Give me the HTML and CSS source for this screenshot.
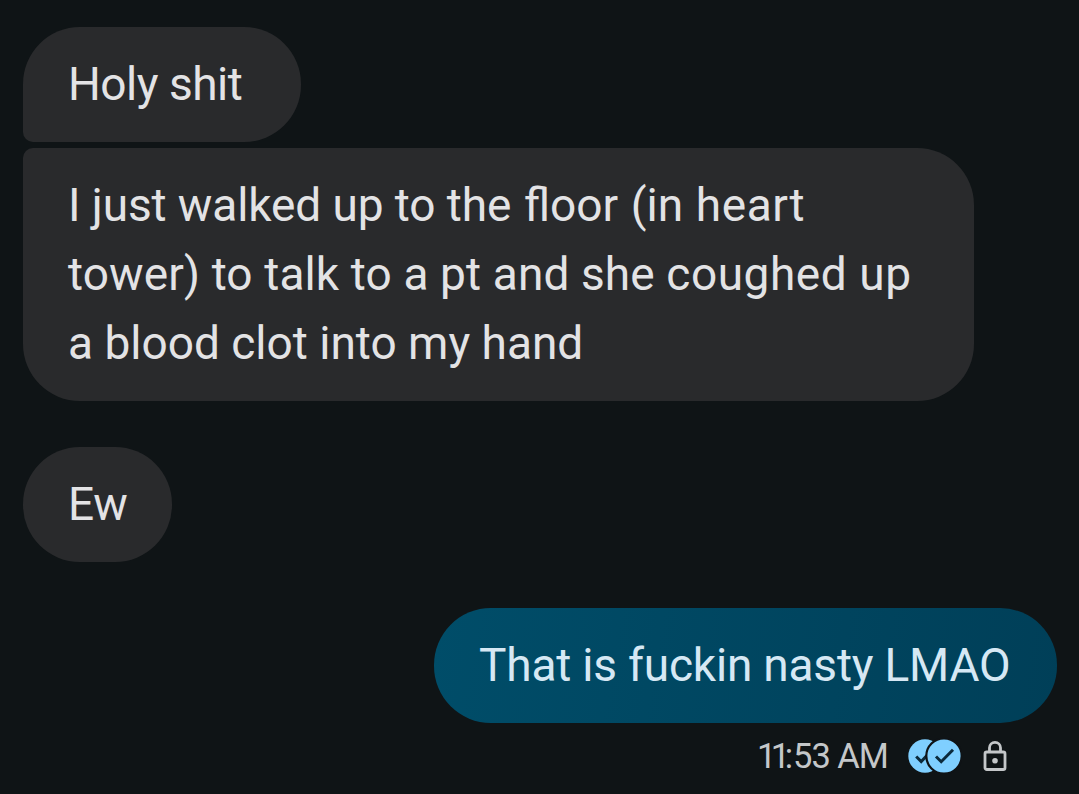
FILE: index.html
```html
<!DOCTYPE html>
<html lang="en">
  <head>
    <meta charset="utf-8">
    <title>Messages</title>
    <link rel="stylesheet" href="styles.css">
  </head>
  <body>
    <main class="chat">
      <div class="bubble first"><span class="short">Holy shit</span></div>
      <div class="bubble last">
        <span class="snug">I just walked up to the</span><span class="spaced"> floor (in </span><span class="wide">heart</span><br>
        <span class="loose">tower) to talk to a pt and she</span> <span class="wide">coughed up</span><br>
        <span>a blood clot into my hand</span>
      </div>
      <div class="bubble single"><span class="short">Ew</span></div>
      <div class="bubble sent"><span class="reply">That is fuckin nasty LMAO</span></div>
      <div class="status">
        <span class="time"><span class="hour">11</span>:<span class="minute">53 AM</span></span>
        <svg class="read" width="54" height="36" viewBox="0 0 54 36">
          <circle cx="17" cy="18" r="16.7" fill="#7fcfff"/>
          <path d="M8.2 18.5l5 5 9-9.5" fill="none" stroke="#0b2a3c" stroke-width="3"/>
          <circle cx="36" cy="18" r="17.7" fill="#7fcfff" stroke="#0f1316" stroke-width="2.2"/>
          <path d="M28 18.5l5.2 5.2 11.8-12" fill="none" stroke="#0b2a3c" stroke-width="3"/>
        </svg>
        <svg class="lock" width="24" height="32" viewBox="0 0 24 32">
          <rect x="2" y="12" width="20" height="17.5" rx="1.8" fill="none" stroke="#c4c7c9" stroke-width="2.8"/>
          <path d="M6.5 12V7.8a5.5 5.5 0 0 1 11 0V12" fill="none" stroke="#c4c7c9" stroke-width="2.8"/>
          <circle cx="12" cy="20.7" r="2.8" fill="#c4c7c9"/>
        </svg>
      </div>
    </main>
  </body>
</html>
```
FILE: styles.css
```css
body {
  margin: 0;
  background-color: #0f1416;
  color: #e3e3e5;
  font-family: Roboto, sans-serif;
}

.chat {
  display: flex;
  flex-direction: column;
  align-items: flex-start;
  box-sizing: border-box;
  height: 794px;
  padding: 27px 22px 0 23px;
  overflow: hidden;
}

.bubble {
  box-sizing: border-box;
  padding: 23px 45px;
  border-radius: 57px;
  background-color: #292a2c;
  font-size: 46px;
  line-height: 69px;
  white-space: nowrap;
}

.first {
  width: 278px;
  margin-bottom: 6px;
  border-bottom-left-radius: 10px;
}

.last {
  width: 951px;
  margin-bottom: 46px;
  border-top-left-radius: 10px;
}

.single {
  width: 149px;
  margin-bottom: 46px;
}

.sent {
  width: 623px;
  align-self: flex-end;
  background: linear-gradient(100deg, #004d69, #003f58);
  color: #d6e8f4;
}

/* letter spacing */
.short {
  letter-spacing: -0.5px;
}

.snug {
  letter-spacing: -0.1px;
}

.loose {
  letter-spacing: 0.12px;
}

.wide {
  letter-spacing: 0.55px;
}

/* keeps the fl ligature */
.spaced {
  word-spacing: 1.3px;
}

.reply {
  letter-spacing: -0.2px;
}

.status {
  display: flex;
  align-items: center;
  align-self: flex-end;
  height: 66px;
  margin-right: 50px;
}

.time {
  color: #c4c7c9;
  font-size: 34.5px;
}

.hour {
  letter-spacing: -5.5px;
}

.minute {
  letter-spacing: -1px;
}

.read {
  margin-left: 20px;
}

.lock {
  margin-left: 21px;
}
```
